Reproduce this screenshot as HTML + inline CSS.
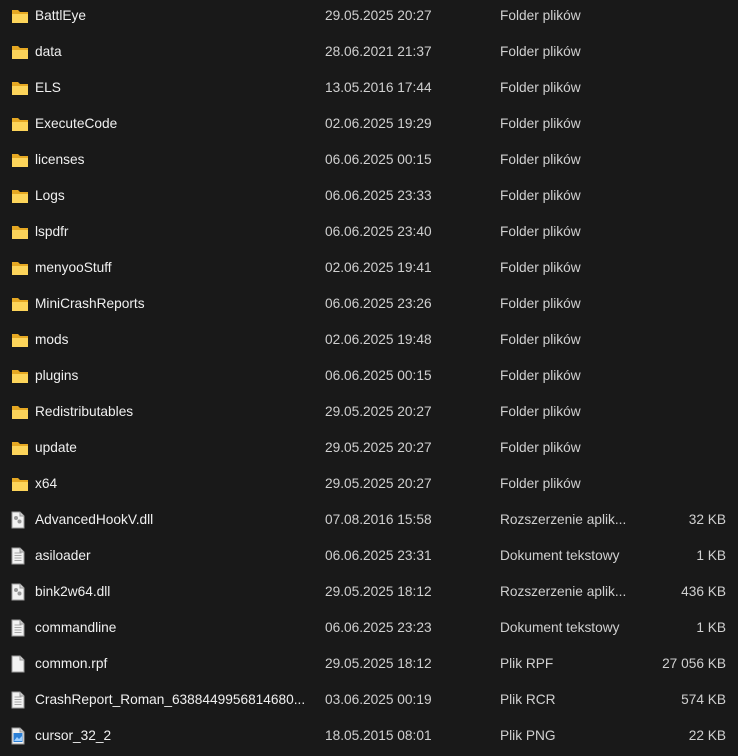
<!DOCTYPE html>
<html><head><meta charset="utf-8"><style>
body{margin:0;background:#191919;width:738px;height:750px;overflow:hidden;font-family:"Liberation Sans",sans-serif;font-size:13.7px;color:#e8e8e8}
.r{position:absolute;left:0;width:738px;height:36px}
.r span{position:absolute;top:0;line-height:31px;white-space:nowrap}
.n{left:35px;color:#f0f0f0}.d{left:325px;color:#d0d0d0}.t{left:500px;color:#d0d0d0}.s{right:12px;color:#d0d0d0}
.r svg{position:absolute;left:11px;top:7px}
</style></head><body>
<svg width="0" height="0" style="position:absolute"><defs>
<symbol id="f" viewBox="0 0 18 16"><path d="M1 2h6l2 2h8v10H1z" fill="#e5a823"/><path d="M1 6h16v9H1z" fill="#fcd45a"/></symbol>
<symbol id="doc" viewBox="0 0 14 18"><path d="M1 1h8l4 4v12H1z" fill="#f2f2f2" stroke="#9a9a9a"/><path d="M9 1v4h4" fill="#d0d0d0" stroke="#9a9a9a"/></symbol>
</defs></svg>
<div id="c"></div>
<script>
var rows=[
["BattlEye","29.05.2025 20:27","Folder plików","","f"],
["data","28.06.2021 21:37","Folder plików","","f"],
["ELS","13.05.2016 17:44","Folder plików","","f"],
["ExecuteCode","02.06.2025 19:29","Folder plików","","f"],
["licenses","06.06.2025 00:15","Folder plików","","f"],
["Logs","06.06.2025 23:33","Folder plików","","f"],
["lspdfr","06.06.2025 23:40","Folder plików","","f"],
["menyooStuff","02.06.2025 19:41","Folder plików","","f"],
["MiniCrashReports","06.06.2025 23:26","Folder plików","","f"],
["mods","02.06.2025 19:48","Folder plików","","f"],
["plugins","06.06.2025 00:15","Folder plików","","f"],
["Redistributables","29.05.2025 20:27","Folder plików","","f"],
["update","29.05.2025 20:27","Folder plików","","f"],
["x64","29.05.2025 20:27","Folder plików","","f"],
["AdvancedHookV.dll","07.08.2016 15:58","Rozszerzenie aplik...","32 KB","g"],
["asiloader","06.06.2025 23:31","Dokument tekstowy","1 KB","l"],
["bink2w64.dll","29.05.2025 18:12","Rozszerzenie aplik...","436 KB","g"],
["commandline","06.06.2025 23:23","Dokument tekstowy","1 KB","l"],
["common.rpf","29.05.2025 18:12","Plik RPF","27 056 KB","b"],
["CrashReport_Roman_6388449956814680...","03.06.2025 00:19","Plik RCR","574 KB","l"],
["cursor_32_2","18.05.2015 08:01","Plik PNG","22 KB","p"]];
var h="";
rows.forEach(function(r,i){
var ic;
if(r[4]=="f")ic='<svg width="18" height="16" style="top:8px"><use href="#f"/></svg>';
else{var ex="";
if(r[4]=="l")ex='<path d="M3.5 6h7M3.5 8.5h7M3.5 11h7M3.5 13.5h7" stroke="#a8a8a8"/>';
if(r[4]=="g")ex='<circle cx="5" cy="7" r="2" fill="#999"/><circle cx="8.5" cy="10.5" r="2" fill="#999"/>';
if(r[4]=="p")ex='<rect x="2.5" y="6" width="9" height="9" fill="#2b7fd6"/><path d="M3 14l3-4 2 2 3-3v5z" fill="#9fd0ff"/>';
ic='<svg width="14" height="18" viewBox="0 0 14 18"><use href="#doc"/>'+ex+'</svg>';}
h+='<div class="r" style="top:'+(i*36)+'px">'+ic+'<span class="n">'+r[0]+'</span><span class="d">'+r[1]+'</span><span class="t">'+r[2]+'</span><span class="s">'+r[3]+'</span></div>';
});
document.getElementById("c").innerHTML=h;
</script>
</body></html>
